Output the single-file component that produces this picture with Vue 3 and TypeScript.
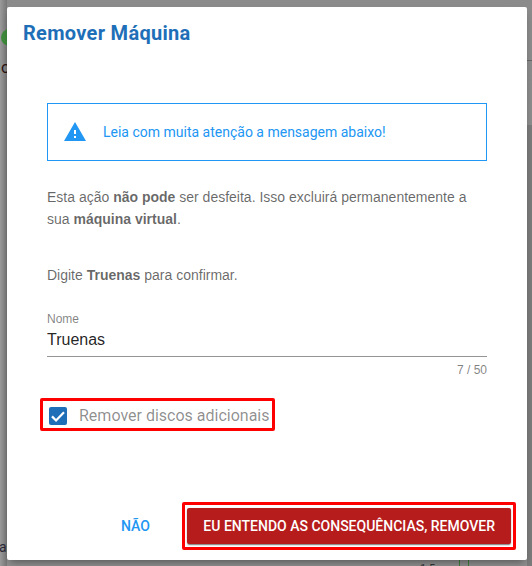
<script setup lang="ts">
import { ref } from 'vue'
const name = ref('Truenas')
const removeDisks = ref(true)
</script>

<template>
  <div class="page">
    <div class="backdrop" aria-hidden="true">
      <span class="bg-rule"></span>
      <span class="bg-dot"></span>
      <span class="bg-text bg-lo">lo</span>
      <span class="bg-text bg-a">a</span>
      <span class="bg-text bg-num">1.5</span>
      <span class="bg-line"></span>
      <span class="bg-strip"></span>
      <span class="bg-bar bar-a"></span>
      <span class="bg-bar bar-b"></span>
    </div>
    <section class="dialog">
      <h2 class="title">Remover Máquina</h2>
      <div class="body">
        <div class="alert">
          <svg class="alert-icon" viewBox="0 0 24 24" width="24" height="24">
            <path fill="#2196f3" d="M1 21h22L12 2 1 21zm12-3h-2v-2h2v2zm0-4h-2v-4h2v4z" />
          </svg>
          <span>Leia com muita atenção a mensagem abaixo!</span>
        </div>
        <p class="warning">
          Esta ação <strong>não pode</strong> ser desfeita. Isso excluirá permanentemente a
          sua <strong>máquina virtual</strong>.
        </p>
        <p class="prompt">Digite <strong>Truenas</strong> para confirmar.</p>
        <div class="field">
          <label class="field-label" for="machine-name">Nome</label>
          <input id="machine-name" v-model="name" class="field-input" maxlength="50" />
          <div class="counter">{{ name.length }} / 50</div>
        </div>
        <label class="check">
          <input v-model="removeDisks" class="check-native" type="checkbox" />
          <span class="check-box">
            <svg v-if="removeDisks" viewBox="0 0 24 24" width="18" height="18">
              <path fill="none" stroke="#fff" stroke-width="3" d="M4 12.5l5.4 5.4L20 7" />
            </svg>
          </span>
          <span class="check-text">Remover discos adicionais</span>
        </label>
      </div>
      <footer class="actions">
        <button class="btn-text" type="button">NÃO</button>
        <div class="confirm-frame">
          <button class="btn-danger" type="button">EU ENTENDO AS CONSEQUÊNCIAS, REMOVER</button>
        </div>
      </footer>
    </section>
  </div>
</template>

<style>
html, body { margin: 0; background: #8e8e8e; }
</style>

<style scoped>
.page {
  position: relative;
  width: 532px;
  height: 566px;
  box-sizing: border-box;
  padding: 7px 5px 6px 7px;
  overflow: hidden;
  background: linear-gradient(#8b8b8b, #8f8f8f);
  font-family: Roboto, "Liberation Sans", sans-serif;
}
.backdrop { position: absolute; inset: 0; }
.bg-dot {
  position: absolute; left: 1px; top: 29px; width: 17px; height: 17px;
  border-radius: 50%; background: #3f8a3c;
}
.bg-text { position: absolute; font-size: 16px; line-height: 16px; }
.bg-lo { left: -3px; top: 60px; color: #2a1414; }
.bg-a { left: -1px; top: 539px; font-size: 14px; color: #2a2836; }
.bg-num { left: 420px; top: 561px; font-size: 11px; color: #333; }
.bg-line { position: absolute; left: 527px; top: 60px; width: 5px; height: 1px; background: #666; }
.bg-strip { position: absolute; left: 527px; top: 125px; width: 5px; height: 441px; background: #7b7b7b; }
.bg-rule { position: absolute; left: 0; top: 0; width: 7px; height: 566px; background: linear-gradient(90deg, #9a9a9a, #777); }
.bg-bar { position: absolute; top: 560px; width: 1px; height: 6px; background: #3f7f3c; }
.bar-a { left: 459px; }
.bar-b { left: 468px; }

.dialog {
  position: relative;
  display: flex;
  flex-direction: column;
  width: 520px;
  height: 553px;
  box-sizing: border-box;
  background: #fff;
  border-radius: 2px;
  box-shadow: 0 5px 8px -3px rgba(0, 0, 0, 0.4);
}
.title {
  margin: 0;
  padding: 14px 16px 0;
  font-size: 20px;
  line-height: 24px;
  font-weight: 700;
  letter-spacing: 0.3px;
  color: #1e6fb8;
}
.body {
  flex: 1;
  padding: 58px 40px 0;
  color: rgba(0, 0, 0, 0.6);
  font-family: "Liberation Sans", Arial, sans-serif;
  font-size: 14px;
  line-height: 22px;
}
.alert {
  display: flex;
  align-items: center;
  gap: 16px;
  height: 58px;
  box-sizing: border-box;
  padding-left: 15px;
  border: 1px solid #2196f3;
  color: #2196f3;
  font-family: Roboto, sans-serif;
  font-size: 14px;
}
.alert-icon { flex: none; }
.warning { margin: 25px 0 0; }
.prompt { margin: 34px 0 0; }
strong { font-weight: 700; }
.field { margin-top: 26px; }
.field-label {
  display: block;
  font-size: 12px;
  line-height: 14px;
  color: rgba(0, 0, 0, 0.5);
}
.field-input {
  display: block;
  width: 100%;
  box-sizing: border-box;
  height: 31px;
  padding: 0 0 2px;
  border: 0;
  border-bottom: 1px solid #949494;
  outline: 0;
  background: transparent;
  font: 16px/24px "Liberation Sans", Arial, sans-serif;
  color: rgba(0, 0, 0, 0.87);
}
.counter {
  margin-top: 6px;
  text-align: right;
  font-size: 12px;
  line-height: 14px;
  color: rgba(0, 0, 0, 0.5);
}
.check {
  display: inline-flex;
  align-items: center;
  box-sizing: border-box;
  height: 33px;
  margin: 21px 0 0 -7px;
  padding: 3px 2px 0 6px;
  border: 3px solid #f00;
  border-radius: 2px;
  cursor: pointer;
}
.check-native { position: absolute; opacity: 0; width: 0; height: 0; }
.check-box {
  display: flex;
  width: 18px;
  height: 18px;
  align-items: center;
  justify-content: center;
  background: #1e6fb8;
  border-radius: 2px;
}
.check-text {
  margin-left: 12px;
  font-family: Roboto, sans-serif;
  font-size: 16px;
  line-height: 20px;
  color: rgba(0, 0, 0, 0.45);
  white-space: nowrap;
}
.actions {
  display: flex;
  align-items: center;
  justify-content: flex-end;
  gap: 15px;
  padding: 0 11px 10px 0;
}
.btn-text,
.confirm-frame .btn-danger {
  font-family: Roboto, sans-serif;
  font-size: 14px;
  font-weight: 500;
  height: 36px;
  border: 0;
  border-radius: 2px;
  cursor: pointer;
}
.btn-text {
  width: 64px;
  padding: 0;
  background: transparent;
  color: #2196f3;
}
.confirm-frame {
  padding: 3px 2px;
  background: #fff;
  border: 3px solid #f00;
  border-radius: 2px;
  line-height: 0;
}
.btn-danger {
  padding: 0 16px;
  background: #b71c1c;
  color: #fff;
  white-space: nowrap;
  box-shadow: 0 2px 1px -1px rgba(0, 0, 0, 0.3), 0 1px 2px rgba(0, 0, 0, 0.3);
}
</style>
